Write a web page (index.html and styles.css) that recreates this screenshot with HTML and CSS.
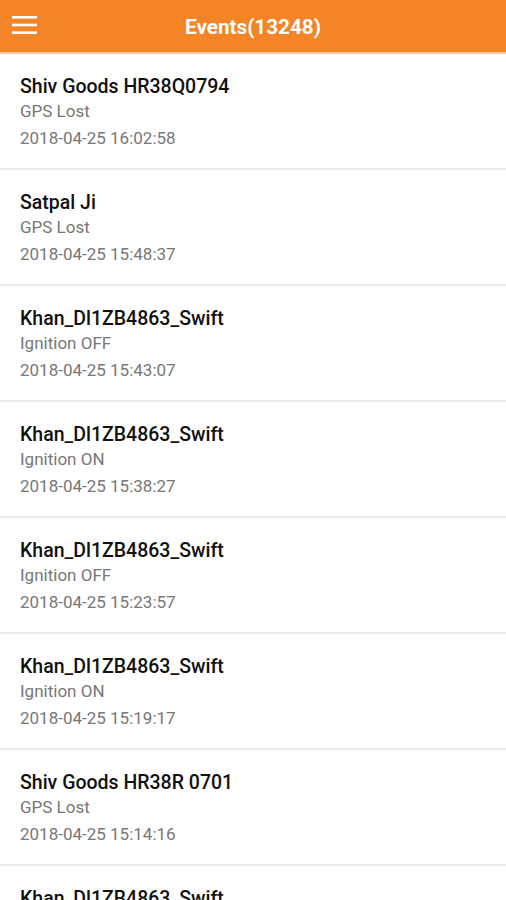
FILE: index.html
```html
<!DOCTYPE html>
<html>
<head>
<meta charset="utf-8">
<link rel="stylesheet" href="styles.css">
</head>
<body>
<header class="bar">
  <svg class="menu" width="26" height="20" viewBox="0 0 26 20">
    <rect x="0" y="1" width="25" height="2.6" fill="#fff"/>
    <rect x="0" y="8.7" width="25" height="2.6" fill="#fff"/>
    <rect x="0" y="16.4" width="25" height="2.6" fill="#fff"/>
  </svg>
  <div class="title">Events(13248)</div>
</header>
<ul class="list">
  <li class="row"><div class="name">Shiv Goods HR38Q0794</div><div class="sub">GPS Lost</div><div class="date">2018-04-25 16:02:58</div></li>
  <li class="row"><div class="name">Satpal Ji</div><div class="sub">GPS Lost</div><div class="date">2018-04-25 15:48:37</div></li>
  <li class="row"><div class="name">Khan_Dl1ZB4863_Swift</div><div class="sub">Ignition OFF</div><div class="date">2018-04-25 15:43:07</div></li>
  <li class="row"><div class="name">Khan_Dl1ZB4863_Swift</div><div class="sub">Ignition ON</div><div class="date">2018-04-25 15:38:27</div></li>
  <li class="row"><div class="name">Khan_Dl1ZB4863_Swift</div><div class="sub">Ignition OFF</div><div class="date">2018-04-25 15:23:57</div></li>
  <li class="row"><div class="name">Khan_Dl1ZB4863_Swift</div><div class="sub">Ignition ON</div><div class="date">2018-04-25 15:19:17</div></li>
  <li class="row"><div class="name">Shiv Goods HR38R 0701</div><div class="sub">GPS Lost</div><div class="date">2018-04-25 15:14:16</div></li>
  <li class="row"><div class="name">Khan_Dl1ZB4863_Swift</div></li>
</ul>
</body>
</html>
```
FILE: styles.css
```css
* { box-sizing: border-box; }
html, body { margin: 0; padding: 0; background: #fff; overflow: hidden; height: 900px; }
body { font-family: Roboto, "Liberation Sans", sans-serif; }
.bar {
  height: 54px;
  background: #f58426;
  border-bottom: 2px solid #f7c9a3;
  display: flex;
  align-items: center;
  position: relative;
}
.menu { position: absolute; left: 12px; top: 15px; }
.title {
  flex: 1;
  text-align: center;
  color: #fff;
  font-size: 20.7px;
  font-weight: 700;
  padding-top: 2px;
}
.list { list-style: none; margin: 0; padding: 0; }
.row {
  padding: 21px 20px 18px;
  border-bottom: 2px solid #ececec;
}
.name { font-size: 19.5px; font-weight: 500; color: #111; line-height: 24px; }
.sub { font-size: 17px; color: #777; line-height: 24px; }
.date { font-size: 17px; color: #777; line-height: 24px; margin-top: 3px; }
```
